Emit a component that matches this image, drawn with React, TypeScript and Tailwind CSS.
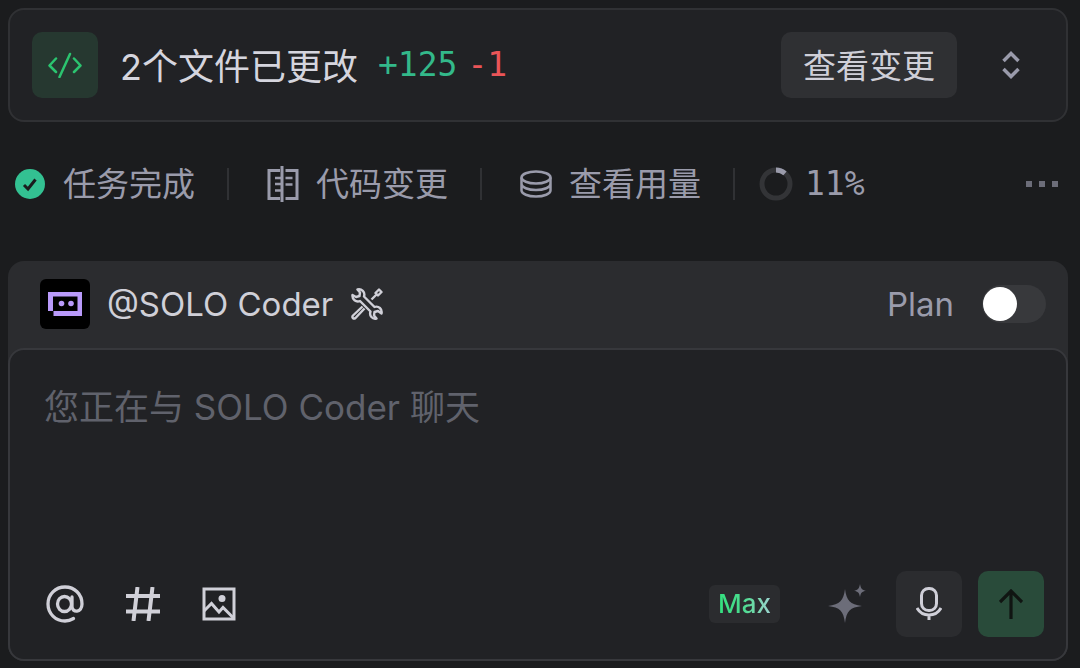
import { useState, type ReactNode } from "react";

function CodeIcon() {
  return (
    <svg width="34" height="26" viewBox="0 0 34 26" fill="none" stroke="#2bc46f" strokeWidth="2.5" strokeLinecap="round" strokeLinejoin="round">
      <path d="M8 6.500 1.500 13.500 8 20M26 6.500l6.500 7-6.500 6.500M22 2 11.500 25" />
    </svg>
  );
}

function UpDownIcon() {
  return (
    <svg width="18" height="28" viewBox="0 0 18 28" fill="none" stroke="#9a9bab" strokeWidth="3.500">
      <path d="m1.500 10 7.500-7.500 7.500 7.500M1.500 18l7.500 7.500 7.500-7.500" />
    </svg>
  );
}

function CheckIcon() {
  return (
    <svg width="30" height="30" viewBox="0 0 30 30" fill="none">
      <circle cx="15" cy="15" r="15" fill="#33c192" />
      <path d="m9 16 4 4 7.500-9.500" stroke="#1b1c1e" strokeWidth="3" />
    </svg>
  );
}

function DiffIcon() {
  return (
    <svg width="34" height="36" viewBox="0 0 34 36" fill="none" stroke="currentColor" strokeWidth="3">
      <path d="M14 4.500H3v28h11M19.500 4.500H31v28H19.500M16 0v36" />
      <path strokeWidth="2.500" d="M9 12h7M9 18h7M9 24.500h7M19.500 12h7M19.500 18.500h7" />
    </svg>
  );
}

function CoinsIcon() {
  return (
    <svg width="32" height="28" viewBox="0 0 32 28" fill="none" stroke="currentColor" strokeWidth="2.500">
      <ellipse cx="16" cy="7.500" rx="14.500" ry="6" />
      <path d="M1.500 7.500v13c0 3.300 6.500 6 14.500 6s14.500-2.700 14.500-6v-13M1.500 14c0 3.300 6.500 6 14.500 6s14.500-2.700 14.500-6" />
    </svg>
  );
}

function UsageRing() {
  return (
    <svg width="34" height="34" viewBox="0 0 34 34" fill="none" strokeWidth="5">
      <circle cx="17" cy="17" r="14" stroke="#333437" />
      <path d="M17 3a14 14 0 0 1 9 3.300" stroke="#9a9bab" />
    </svg>
  );
}

function DotsIcon() {
  return (
    <svg width="32" height="6" viewBox="0 0 32 6" fill="#6c6d79">
      <path d="M0 0h6v6H0zM13 0h6v6h-6zM26 0h6v6h-6z" />
    </svg>
  );
}

function BotIcon() {
  return (
    <svg width="34" height="26" viewBox="0 0 34 26" fill="#b99afa">
      <path fillRule="evenodd" d="M0 1h34v24H5.500v-5H0zM5 5.500V20h24.500V5.500z" />
      <circle cx="13.500" cy="12.500" r="2.800" />
      <circle cx="23" cy="12.500" r="2.800" />
    </svg>
  );
}

function ToolsIcon() {
  return (
    <svg width="32" height="32" viewBox="0 0 32 32" fill="none" stroke="#d0d0d8" strokeWidth="2.400" strokeLinejoin="round">
      <path d="M6.500 1.500c4-1 8 2.500 6.500 7l10.500 10.500c4-1.500 8 2 7 6.500l-3.500-2.500-3.500 1-.5 3.500 2.500 3c-4 1-7.500-2.500-6-7L9 13C5 14.500 1 11.500 1.500 7L5 9l3.500-1 .5-3.500z" />
      <path d="M20.500 11.500 25 7M24.500 5 28 1.500 30.500 4 27 7.500zM11.500 18.500l-9.500 9c-1.500 2 .5 4 2.500 2.500l9-9.500" />
    </svg>
  );
}

function AtIcon() {
  return (
    <svg width="38" height="38" viewBox="0 0 38 38" fill="none" stroke="currentColor" strokeWidth="3.300" strokeLinecap="round">
      <ellipse cx="18.500" cy="19" rx="7" ry="7.500" />
      <path d="M26 12v9.500c0 6.500 10 6.500 10-2.500C36 9 28.500 2 19 2S2 9.500 2 19s7.500 17 17 17c3.500 0 6-1 8.500-2.500" />
    </svg>
  );
}

function HashIcon() {
  return (
    <svg width="34" height="34" viewBox="0 0 34 34" fill="none" stroke="currentColor" strokeWidth="4">
      <path d="M0 9h34M0 24.500h34M11.500 0 7.500 34M26.500 0l-4 34" />
    </svg>
  );
}

function PictureIcon() {
  return (
    <svg width="34" height="34" viewBox="0 0 34 34" fill="none" stroke="currentColor" strokeWidth="3">
      <path d="M2 2h30v30H2z" />
      <path d="m2 24 7.500-7.500 7.500 8.500 4-4.500L32 31.500" />
      <circle cx="20" cy="11.500" r="3.500" fill="currentColor" stroke="none" />
    </svg>
  );
}

function SparkleIcon() {
  return (
    <svg width="38" height="40" viewBox="0 0 38 40" fill="#6c6d79">
      <path d="M17 5c1.500 11.500 5 15.500 17 17-12 1.500-15.500 5-17 17-1.500-12-5-15.500-17-17C12 20.500 15.500 16.500 17 5z" />
      <path d="M32 0c.8 4.500 2 6 6 6.800-4 .8-5.200 2-6 6.200-.8-4.200-2-5.400-6-6.200 4-.8 5.200-2.300 6-6.800z" />
    </svg>
  );
}

function MicIcon() {
  return (
    <svg width="26" height="34" viewBox="0 0 26 34" fill="none" stroke="#cfcfd8" strokeWidth="3">
      <rect x="5.500" y="1.500" width="15" height="22" rx="7" />
      <path d="M1 21c2.500 4.500 7 7 12 7s9.500-2.500 12-7M13 28v5" />
    </svg>
  );
}

function SendIcon() {
  return (
    <svg width="24" height="30" viewBox="0 0 24 30" fill="none" stroke="#101512" strokeWidth="3.200">
      <path d="M12 30V2.500M1 13 12 2l11 11" />
    </svg>
  );
}

function StatusItem({ icon, children }: { icon: ReactNode; children: ReactNode }) {
  return (
    <button type="button" className="flex items-center gap-4 whitespace-nowrap">
      <span className="flex w-[34px] shrink-0 justify-center">{icon}</span>
      {children}
    </button>
  );
}

function Divider() {
  return <div className="h-8 w-[2px] shrink-0 bg-[#303134]" />;
}

export default function App() {
  const [plan, setPlan] = useState(false);
  const [message, setMessage] = useState("");

  return (
    <main className="min-h-screen bg-[#1b1c1e] py-2 pr-3 pl-2 font-['Inter','Noto_Sans_CJK_SC',sans-serif] text-[#9a9bab]">
      <section className="flex items-center rounded-2xl border-2 border-[#303134] bg-[#212225] p-[22px]">
        <div className="flex size-[66px] items-center justify-center rounded-[10px] bg-[#263830]">
          <CodeIcon />
        </div>
        <h1 className="ml-[22px] pt-[3px] text-[36px] leading-[48px] text-[#d5d5de]">2个文件已更改</h1>
        <p className="ml-5 flex gap-[10px] font-['DejaVu_Sans_Mono',monospace] text-[33px] leading-[48px]">
          <span className="text-[#33b98a]">+125</span>
          <span className="text-[#ea5558]">-1</span>
        </p>
        <button type="button" className="ml-auto h-[66px] rounded-[10px] bg-[#2f3033] px-[22px] pt-[3px] text-[33px] text-[#cfcfd8]">
          查看变更
        </button>
        <button type="button" aria-label="展开" className="mr-[11px] ml-8 flex size-11 items-center justify-center">
          <UpDownIcon />
        </button>
      </section>

      <nav className="mt-[38px] flex h-12 items-center pr-[10px] pl-[5px] text-[33px] leading-[48px]">
        <StatusItem icon={<CheckIcon />}>任务完成</StatusItem>
        <div className="ml-8 flex items-center gap-[37px]">
          <Divider />
          <StatusItem icon={<DiffIcon />}>代码变更</StatusItem>
        </div>
        <div className="ml-8 flex items-center gap-[37px]">
          <Divider />
          <StatusItem icon={<CoinsIcon />}>查看用量</StatusItem>
        </div>
        <div className="ml-8 flex items-center gap-6">
          <Divider />
          <div className="flex items-center gap-3">
            <UsageRing />
            <span className="font-['DejaVu_Sans_Mono',monospace]">11%</span>
          </div>
        </div>
        <button type="button" aria-label="更多" className="ml-auto flex h-8 items-center">
          <DotsIcon />
        </button>
      </nav>

      <section className="mt-[53px] rounded-2xl bg-[#2b2c2f]">
        <header className="flex h-[87px] items-center pr-[22px] pb-[2px] pl-8">
          <div className="flex size-[50px] items-center justify-center rounded-md bg-black">
            <BotIcon />
          </div>
          <h2 className="mr-[18px] ml-[17px] text-[33px] leading-[48px] text-[#d0d0d8]">@SOLO Coder</h2>
          <ToolsIcon />
          <label className="ml-auto flex items-center gap-7 text-[33px] leading-[48px]">
            Plan
            <input
              type="checkbox"
              role="switch"
              checked={plan}
              onChange={(e) => setPlan(e.target.checked)}
              className="flex h-[38px] w-16 appearance-none items-center rounded-full bg-[#38393c] px-[1px] before:size-[34px] before:rounded-full before:bg-white checked:justify-end checked:bg-[#33c192]"
            />
          </label>
        </header>

        <div className="rounded-2xl border-2 border-[#37383c] bg-[#212225] pt-8 pr-[22px] pb-[22px] pl-[34px]">
          <textarea
            rows={3}
            aria-label="消息"
            value={message}
            onChange={(e) => setMessage(e.target.value)}
            placeholder="您正在与 SOLO Coder 聊天"
            className="block w-full resize-none bg-transparent text-[35px] leading-[50px] text-[#d5d5de] outline-none placeholder:text-[#60626c]"
          />
          <div className="mt-[39px] flex items-center justify-between">
            <div className="flex items-center gap-[42px] pl-[2px] text-[#d0d0d8]">
              <button type="button" aria-label="提及">
                <AtIcon />
              </button>
              <button type="button" aria-label="话题">
                <HashIcon />
              </button>
              <button type="button" aria-label="图片">
                <PictureIcon />
              </button>
            </div>
            <div className="flex items-center">
              <button type="button" className="h-[38px] rounded-md bg-[#2b2c2f] px-[9px] text-[26px] leading-[38px] font-medium">
                <span className="bg-linear-to-r from-[#32e07e] via-[#4cdb91] to-[#9bd3d0] bg-clip-text text-transparent">Max</span>
              </button>
              <button type="button" aria-label="优化提示词" className="mr-[30px] ml-12">
                <SparkleIcon />
              </button>
              <button type="button" aria-label="语音输入" className="mr-4 flex size-[66px] items-center justify-center rounded-[10px] bg-[#2b2c2f]">
                <MicIcon />
              </button>
              <button type="button" aria-label="发送" className="flex size-[66px] items-center justify-center rounded-[10px] bg-[#294b3a]">
                <SendIcon />
              </button>
            </div>
          </div>
        </div>
      </section>
    </main>
  );
}
